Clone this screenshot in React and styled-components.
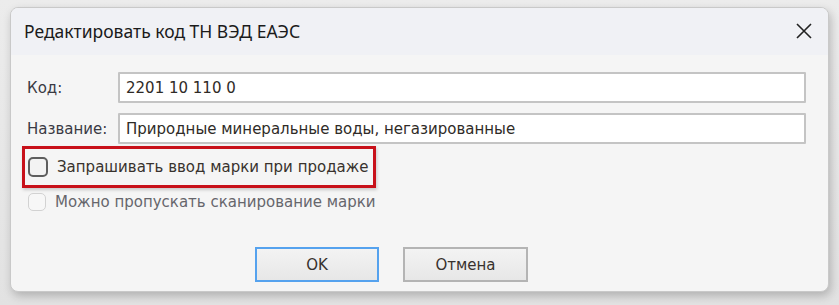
import React from "react";
import styled, { createGlobalStyle } from "styled-components";

const Global = createGlobalStyle`
  html, body {
    margin: 0;
    padding: 0;
    background: #e4e4e4;
    width: 839px;
    height: 305px;
    overflow: hidden;
  }
`;

const Backdrop = styled.div`
  width: 839px;
  height: 305px;
  padding: 7px 0 0 10px;
  box-sizing: border-box;
  background: linear-gradient(180deg, #ececec 0%, #e2e2e2 100%);
`;

const Dialog = styled.div`
  width: 819px;
  height: 285px;
  box-sizing: border-box;
  border: 1px solid #c9c9c9;
  border-radius: 8px;
  background: #f5f5f5;
  box-shadow: 2px 4px 10px rgba(0, 0, 0, 0.22);
  overflow: hidden;
  display: flex;
  flex-direction: column;
`;

const TitleBar = styled.div`
  height: 47px;
  flex-shrink: 0;
  background: #f0f1f5;
  display: flex;
  align-items: center;
  justify-content: space-between;
  padding: 0 12px 0 13px;
`;

const Title = styled.div`
  font-family: "Noto Sans", "Open Sans", sans-serif;
  font-size: 17.5px;
  color: #1b1b1b;
  margin-top: -2px;
`;

const Close = styled.svg`
  width: 18px;
  height: 18px;
  margin-top: -2px;
  margin-right: 3px;
  stroke: #222;
  stroke-width: 1.6;
  fill: none;
`;

const Body = styled.div`
  flex: 1;
  display: flex;
  flex-direction: column;
  padding: 17px 22px 0 16px;
  font-family: "DejaVu Sans", Tahoma, sans-serif;
  font-size: 15px;
`;

const Grid = styled.div`
  display: grid;
  grid-template-columns: 91px 1fr;
  row-gap: 10px;
  align-items: center;
`;

const Label = styled.label`
  color: #3a3a44;
`;

const Field = styled.div`
  height: 31px;
  box-sizing: border-box;
  border: 2px solid #c4c4c4;
  border-radius: 1px;
  background: #fff;
  display: flex;
  align-items: center;
  padding-left: 6px;
  color: #2f2b27;
`;

const Highlight = styled.div`
  align-self: flex-start;
  margin: 2px 0 0 -5px;
  border: 3px solid #c8111a;
  padding: 0 5px 0 3px;
  height: 42px;
  box-sizing: border-box;
  display: flex;
  align-items: center;
  box-shadow: 1px 2px 3px rgba(0, 0, 0, 0.18);
`;

const CheckRow = styled.div`
  display: flex;
  align-items: center;
  gap: 9px;
  color: ${(p) => (p.disabled ? "#66666c" : "#38322d")};
`;

const PlainRow = styled(CheckRow)`
  margin-top: 4px;
  margin-left: 1px;
  height: 20px;
`;

const Box = styled.span`
  display: inline-block;
  flex-shrink: 0;
  width: ${(p) => (p.disabled ? 18 : 20)}px;
  height: ${(p) => (p.disabled ? 18 : 20)}px;
  box-sizing: border-box;
  border: ${(p) => (p.disabled ? "1.5px solid #d2d2d2" : "2px solid #5e5e5e")};
  border-radius: 5px;
  background: ${(p) => (p.disabled ? "#f7f7f7" : "#f3f3f3")};
`;

const Buttons = styled.div`
  display: flex;
  gap: 24px;
  margin-top: 35px;
  padding-left: 228px;
`;

const Button = styled.button`
  height: 35px;
  width: ${(p) => p.w}px;
  box-sizing: border-box;
  border: ${(p) => (p.primary ? "2px solid #55a2ee" : "2px solid #b4b4b4")};
  background: linear-gradient(180deg, #f3f3f3 0%, #e7e7e7 100%);
  font-family: "DejaVu Sans", Tahoma, sans-serif;
  font-size: 15px;
  color: #38322d;
  padding: 0;
`;

export default function App() {
  return (
    <>
      <Global />
      <Backdrop>
        <Dialog>
          <TitleBar>
            <Title>Редактировать код ТН ВЭД ЕАЭС</Title>
            <Close viewBox="0 0 18 18">
              <path d="M2 2 L16 16 M16 2 L2 16" />
            </Close>
          </TitleBar>
          <Body>
            <Grid>
              <Label>Код:</Label>
              <Field>2201 10 110 0</Field>
              <Label>Название:</Label>
              <Field>Природные минеральные воды, негазированные</Field>
            </Grid>
            <Highlight>
              <CheckRow>
                <Box />
                Запрашивать ввод марки при продаже
              </CheckRow>
            </Highlight>
            <PlainRow disabled>
              <Box disabled />
              Можно пропускать сканирование марки
            </PlainRow>
            <Buttons>
              <Button primary w={124}>OK</Button>
              <Button w={125}>Отмена</Button>
            </Buttons>
          </Body>
        </Dialog>
      </Backdrop>
    </>
  );
}
